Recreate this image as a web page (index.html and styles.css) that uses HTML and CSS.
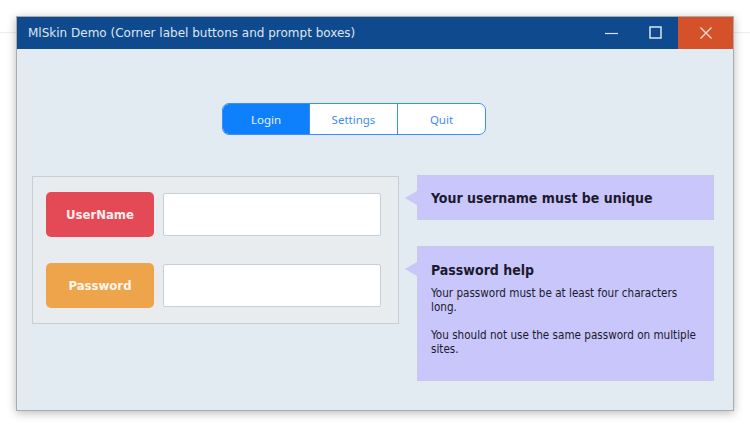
FILE: index.html
```html
<!DOCTYPE html>
<html>
<head>
<meta charset="utf-8">
<link rel="stylesheet" href="styles.css">
</head>
<body>
<div class="desk">
  <div class="window">
    <div class="titlebar">
      <div class="title">MlSkin Demo (Corner label buttons and prompt boxes)</div>
      <div class="controls">
        <div class="ctl min"><svg width="14" height="14" viewBox="0 0 14 14"><line x1="0" y1="7.5" x2="13" y2="7.5" stroke="#d8e2f0" stroke-width="1.2"/></svg></div>
        <div class="ctl max"><svg width="14" height="14" viewBox="0 0 14 14"><rect x="1" y="1" width="11" height="11" fill="none" stroke="#e8eef6" stroke-width="1.4"/></svg></div>
        <div class="ctl close"><svg width="14" height="14" viewBox="0 0 14 14"><path d="M1.5 1.5 L12.5 12.5 M12.5 1.5 L1.5 12.5" stroke="#f6ddd2" stroke-width="1.3"/></svg></div>
      </div>
    </div>
    <div class="content">
      <div class="segments">
        <div class="seg active">Login</div>
        <div class="seg">Settings</div>
        <div class="seg">Quit</div>
      </div>
      <div class="main">
        <div class="panel">
          <div class="row">
            <div class="label red">UserName</div>
            <div class="input"></div>
          </div>
          <div class="row">
            <div class="label orange">Password</div>
            <div class="input"></div>
          </div>
        </div>
        <div class="tips">
          <div class="tip tip1">
            <div class="tip-title">Your username must be unique</div>
          </div>
          <div class="tip tip2">
            <div class="tip-title">Password help</div>
            <p class="tip-text">Your password must be at least four characters long.</p>
            <p class="tip-text">You should not use the same password on multiple sites.</p>
          </div>
        </div>
      </div>
    </div>
  </div>
</div>
</body>
</html>
```

FILE: styles.css
```css
html, body {
  margin: 0;
  padding: 0;
  background: #ffffff;
}
.desk {
  width: 750px;
  height: 426px;
  padding: 16px 0 0 16px;
  box-sizing: border-box;
  background: linear-gradient(#ffffff 0, #ffffff 32px, #ededed 32px, #ededed 33px, #ffffff 33px);
}
.window {
  width: 718px;
  height: 395px;
  box-sizing: border-box;
  border: 1px solid #a9abad;
  background: #e1ebf1;
  box-shadow: 0 2px 9px rgba(0,0,0,0.28);
  display: flex;
  flex-direction: column;
}
.titlebar {
  height: 32px;
  background: #0f4a8e;
  display: flex;
  align-items: stretch;
  justify-content: space-between;
  flex-shrink: 0;
}
.title {
  font-family: "DejaVu Sans", sans-serif;
  font-size: 12px;
  color: #dde6f2;
  padding-left: 11px;
  line-height: 33px;
}
.controls {
  display: flex;
}
.ctl {
  display: flex;
  align-items: center;
  justify-content: center;
}
.min { width: 44px; }
.max { width: 44px; }
.close { width: 55px; background: #d5512a; }
.content {
  flex: 1;
  display: flex;
  flex-direction: column;
  padding: 54px 0 0 15px;
}
.segments {
  display: flex;
  margin-left: 190px;
  width: 264px;
  height: 32px;
  box-sizing: border-box;
  border: 1px solid #3d8ef6;
  border-radius: 7px;
  overflow: hidden;
  background: #ffffff;
}
.seg {
  font-family: "Noto Sans", sans-serif;
  font-size: 11.5px;
  color: #3f8cf2;
  display: flex;
  align-items: center;
  justify-content: center;
  border-left: 1px solid #3d8ef6;
  width: 88px;
}
.seg:first-child { border-left: none; width: 87px; }
.seg.active { background: #0f80fb; color: #e8f2ff; }
.main {
  display: flex;
  align-items: flex-start;
  margin-top: 40px;
}
.panel {
  margin-top: 1px;
  width: 367px;
  height: 148px;
  box-sizing: border-box;
  background: #e8ecee;
  border: 1px solid #c8cfd4;
  padding: 15px 0 0 13px;
  display: flex;
  flex-direction: column;
  gap: 26px;
}
.row {
  display: flex;
  align-items: center;
  gap: 9px;
}
.label {
  width: 108px;
  height: 45px;
  border-radius: 5px;
  display: flex;
  align-items: center;
  justify-content: center;
  font-family: "DejaVu Sans Condensed", "DejaVu Sans", sans-serif;
  font-weight: bold;
  font-size: 13px;
  color: #fdeeee;
}
.red { background: #e44a56; }
.orange { background: #eea44b; color: #fff6ea; }
.input {
  width: 218px;
  height: 43px;
  box-sizing: border-box;
  background: #ffffff;
  border: 1px solid #c6d0d8;
  border-radius: 2px;
}
.tips {
  margin-left: 18px;
  display: flex;
  flex-direction: column;
  gap: 26px;
}
.tip {
  position: relative;
  width: 297px;
  box-sizing: border-box;
  background: #c8c6fa;
  border: 1px solid #c9c9e6;
  padding-left: 13px;
  color: #1c1a2c;
}
.tip::before {
  content: "";
  position: absolute;
  left: -13px;
  width: 0;
  height: 0;
  border-top: 7px solid transparent;
  border-bottom: 7px solid transparent;
  border-right: 12px solid #c8c6fa;
}
.tip1 {
  height: 45px;
  display: flex;
  align-items: center;
}
.tip1::before { top: 15px; }
.tip2 {
  height: 135px;
  padding-top: 14px;
}
.tip2::before { top: 15px; }
.tip-title {
  font-family: "DejaVu Sans Condensed", "DejaVu Sans", sans-serif;
  font-weight: bold;
  font-size: 14px;
  line-height: 18px;
}
.tip-text {
  margin: 7px 0 0 0;
  font-family: "DejaVu Sans Condensed", "DejaVu Sans", sans-serif;
  font-size: 11.6px;
  line-height: 14px;
  width: 272px;
}
.tip-text + .tip-text { margin-top: 14px; }
```
